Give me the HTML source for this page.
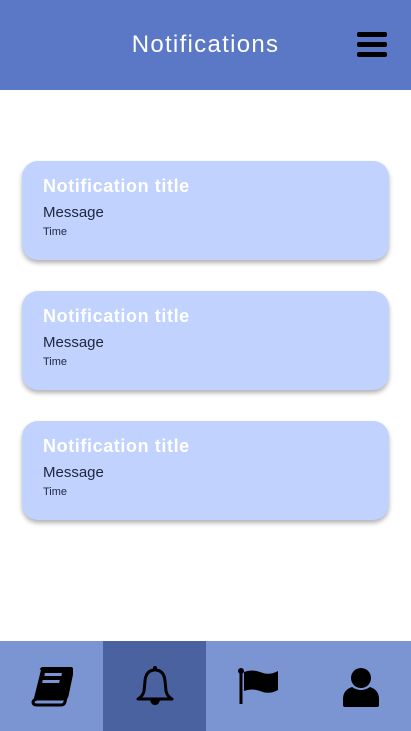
<!DOCTYPE html>
<html><head><meta charset="utf-8"><style>
*{margin:0;padding:0;box-sizing:border-box}
body{width:411px;height:731px;background:#fff;font-family:"Liberation Sans",sans-serif;position:relative;overflow:hidden}
.hdr{position:absolute;left:0;top:0;width:411px;height:90px;background:#5b78c6}
.hdr h1{position:absolute;left:0;width:411px;top:31px;text-align:center;color:#fff;font-weight:normal;font-size:24px;letter-spacing:1.3px}
.bar{position:absolute;left:357px;width:30px;height:5px;background:#000;border-radius:2px}
.card{position:absolute;left:22px;width:367px;height:99px;background:#c0d2fd;border-radius:16px;box-shadow:0 3px 5px rgba(0,0,0,0.3)}
.t{position:absolute;left:21px;top:15px;color:#fff;font-size:18px;font-weight:bold;letter-spacing:0.6px}
.m{position:absolute;left:21px;top:43px;color:#1e2540;font-size:15px}
.ti{position:absolute;left:21px;top:65px;color:#1e2540;font-size:11px}
.nav{position:absolute;left:0;top:641px;width:411px;height:90px;background:#7b94d2}
.act{position:absolute;left:103px;top:0;width:103px;height:90px;background:#4a62a0}
.nav svg{position:absolute}
</style></head><body>
<div class="hdr"><h1>Notifications</h1>
<div class="bar" style="top:32px"></div><div class="bar" style="top:42px"></div><div class="bar" style="top:52px"></div></div>

<div class="card" style="top:161px"><div class="t">Notification title</div><div class="m">Message</div><div class="ti">Time</div></div>
<div class="card" style="top:291px"><div class="t">Notification title</div><div class="m">Message</div><div class="ti">Time</div></div>
<div class="card" style="top:421px"><div class="t">Notification title</div><div class="m">Message</div><div class="ti">Time</div></div>

<div class="nav"><div class="act"></div>
<svg style="left:31px;top:26px" width="42" height="40" viewBox="0 0 42 40">
<path d="M10 3 Q11 1 14 1 L38 1 Q42 1 41 5 L36 29 Q35 32 32 32 L7 32 Q3 32 2 35 Q2 38 6 38 L30 38 Q33 38 34 35 L39 12" fill="none" stroke="#000" stroke-width="3"/>
<path d="M10 3 Q11 1 14 1 L38 1 Q42 1 41 5 L36 29 Q35 32 32 32 L7 32 Q3 32 2 35 Z" fill="#000"/>
<rect x="15" y="6" width="17" height="3" fill="#7b94d2" transform="skewX(-10)"/>
<rect x="14" y="13" width="17" height="3" fill="#7b94d2" transform="skewX(-10)"/>
</svg>
<svg style="left:135px;top:24px" width="40" height="42" viewBox="0 0 40 42">
<circle cx="20" cy="3" r="2" fill="#000"/>
<path d="M20 5 Q11 5 10 16 L9 26 Q8 31 3 34 L37 34 Q32 31 31 26 L30 16 Q29 5 20 5 Z" fill="none" stroke="#000" stroke-width="3" stroke-linejoin="round"/>
<path d="M15 35 Q16 40 20 40 Q24 40 25 35" fill="#000"/>
</svg>
<svg style="left:238px;top:27px" width="42" height="40" viewBox="0 0 42 40">
<circle cx="3" cy="3" r="3" fill="#000"/>
<rect x="1.5" y="3" width="3" height="33" fill="#000"/>
<path d="M6 4 Q14 1 22 4 Q31 8 40 3 L40 22 Q31 27 22 23 Q14 20 6 23 Z" fill="#000"/>
</svg>
<svg style="left:342px;top:27px" width="38" height="40" viewBox="0 0 38 40">
<circle cx="19" cy="10" r="10" fill="#000"/>
<path d="M10 19 Q19 25 28 19 Q37 22 37 31 L37 37 Q37 39 35 39 L3 39 Q1 39 1 37 L1 31 Q1 22 10 19 Z" fill="#000"/>
</svg>
</div>
</body></html>
